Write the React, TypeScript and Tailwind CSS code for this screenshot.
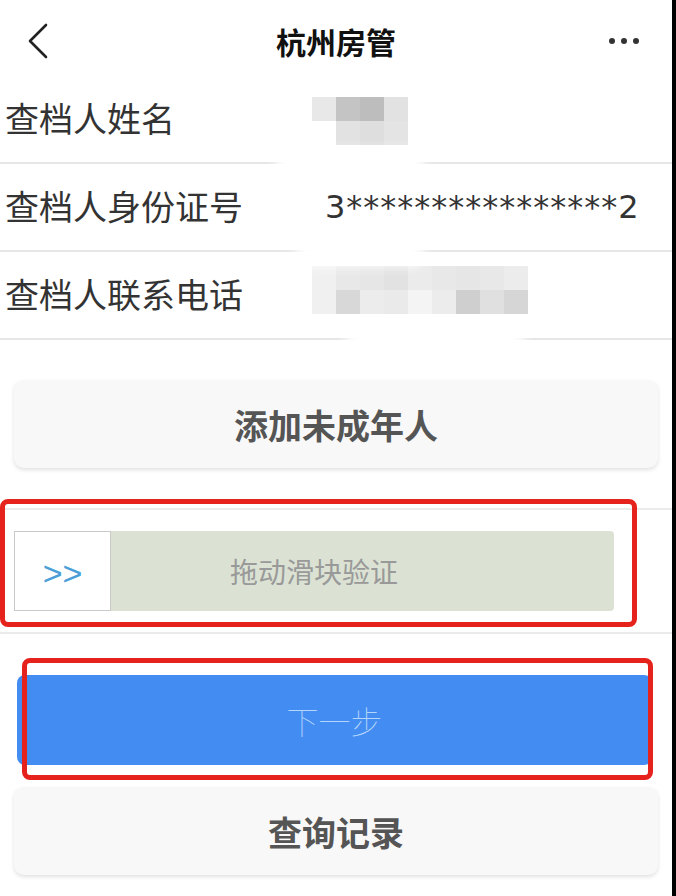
const cjk = { fontFamily: '"Noto Sans CJK SC", "Noto Sans", sans-serif' };

const nameCells = [
  "bg-[#e8e8e8]", "bg-[#c4c4c4]", "bg-[#bdbdbd]", "bg-[#e2e2e2]",
  "bg-white", "bg-[#e2e2e2]", "bg-[#dedede]", "bg-[#e4e4e4]",
];

const phoneCells = [
  "bg-[#f0f0f0]", "bg-[#e8e8e8]", "bg-[#e6e6e6]", "bg-[#e2e2e2]", "bg-[#ebebeb]", "bg-[#e8e8e8]", "bg-[#e6e6e6]", "bg-[#e8e8e8]", "bg-[#ececec]",
  "bg-[#f0f0f0]", "bg-[#d8d8d8]", "bg-[#ececec]", "bg-[#eaeaea]", "bg-[#f4f4f4]", "bg-[#ececec]", "bg-[#cfcfcf]", "bg-[#e0e0e0]", "bg-[#d6d6d6]",
];

const Row = ({ label, children }: { label: string; children?: React.ReactNode }) => (
  <div className="flex h-[88px] items-center border-b-2 border-[#e6e6e6]">
    <div className="mb-[4px] w-[312px] pl-[5px] text-[34px] text-[#333]" style={cjk}>
      {label}
    </div>
    {children}
  </div>
);

const GreyButton = ({ text }: { text: string }) => (
  <button
    className="mx-[14px] flex h-[88px] items-center justify-center rounded-[10px] bg-[#f8f8f8] text-[34px] font-bold text-[#555] shadow-[0_2px_4px_rgba(0,0,0,0.12)]"
    style={cjk}
  >
    {text}
  </button>
);

export default function App() {
  return (
    <div className="flex min-h-[896px] w-[676px] bg-white">
      <div className="relative w-[672px] overflow-hidden">
        {/* header */}
        <div className="grid h-[76px] grid-cols-[1fr_auto_1fr] items-center pt-[6px] pl-[27px] pr-[33px]">
          <svg width="22" height="36" viewBox="0 0 22 36" fill="none">
            <path d="M19 2 L3 18 L19 34" stroke="#222" strokeWidth="2.6" strokeLinecap="round" strokeLinejoin="round" />
          </svg>
          <div className="ml-[6px] text-[30px] font-bold text-[#111]" style={cjk}>
            杭州房管
          </div>
          <div className="flex justify-end gap-[6px]">
            <span className="h-[6px] w-[6px] rounded-full bg-[#333]" />
            <span className="h-[6px] w-[6px] rounded-full bg-[#333]" />
            <span className="h-[6px] w-[6px] rounded-full bg-[#333]" />
          </div>
        </div>

        {/* info rows */}
        <Row label="查档人姓名">
          <div className="mt-[4px] grid grid-cols-4">
            {nameCells.map((c, i) => (
              <div key={i} className={`h-[24px] w-[24px] ${c}`} />
            ))}
          </div>
        </Row>
        <Row label="查档人身份证号">
          <div
            className="ml-[13px] text-[32px] tracking-[1px] text-[#333]"
            style={{ fontFamily: '"DejaVu Sans", sans-serif' }}
          >
            3****************2
          </div>
        </Row>
        <Row label="查档人联系电话">
          <div className="mb-[10px] grid grid-cols-9">
            {phoneCells.map((c, i) => (
              <div key={i} className={`h-[24px] w-[24px] ${c}`} />
            ))}
          </div>
        </Row>

        {/* soft blur halo from the mosaic */}
        <div className="pointer-events-none absolute left-[275px] top-[150px] h-[28px] w-[150px] rounded-full bg-white blur-[6px]" />
        <div className="pointer-events-none absolute left-[295px] top-[240px] h-[26px] w-[130px] rounded-full bg-white blur-[6px]" />
        <div className="pointer-events-none absolute left-[345px] top-[328px] h-[26px] w-[180px] rounded-full bg-white blur-[6px]" />

        <div className="flex flex-col pt-[40px]">
          <GreyButton text="添加未成年人" />
        </div>

        {/* slider */}
        <div className="mt-[40px] border-y-2 border-[#ebebeb] px-[14px] py-[21px]">
          <div className="relative flex h-[80px] w-[600px] items-center rounded-[4px] bg-[#dbe2d3]">
            <div className="z-10 flex h-[80px] w-[97px] items-center justify-center border border-[#c9c9c9] bg-white">
              <span
                className="mt-[4px] text-[34px] text-[#4a9fd8]"
                style={{ fontFamily: '"Liberation Sans", sans-serif' }}
              >
                &gt;&gt;
              </span>
            </div>
            <div className="absolute inset-0 flex items-center justify-center text-[28px] text-[#999]" style={cjk}>
              拖动滑块验证
            </div>
          </div>
        </div>

        {/* next */}
        <div className="flex flex-col pt-[41px]">
          <button
            className="ml-[17px] mr-[20px] flex h-[90px] items-center justify-center rounded-[8px] bg-[#438cf1] text-[32px] font-thin text-[#b3d6fb]"
            style={cjk}
          >
            下一步
          </button>
        </div>

        <div className="flex flex-col pt-[22px] pb-[18px]">
          <GreyButton text="查询记录" />
        </div>

        {/* red annotation boxes */}
        <div className="pointer-events-none absolute left-0 top-[499px] h-[128px] w-[637px] rounded-[8px] border-[5px] border-[#e6221d]" />
        <div className="pointer-events-none absolute left-[22px] top-[658px] h-[122px] w-[631px] rounded-[8px] border-[5px] border-[#e6221d]" />
      </div>
      <div className="w-[4px] bg-black" />
    </div>
  );
}
